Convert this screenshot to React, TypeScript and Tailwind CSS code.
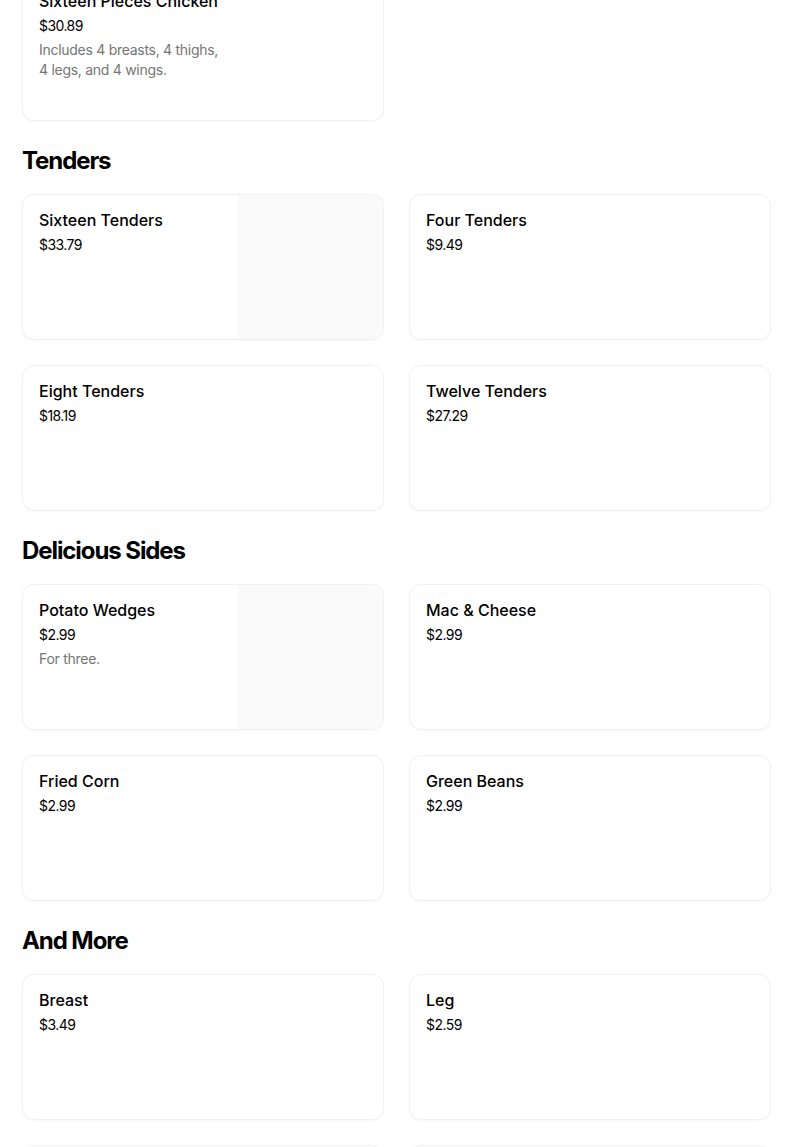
import React from 'react';

interface Item {
  name: string;
  price: string;
  desc?: string;
  image?: boolean;
}

interface Section {
  title?: string;
  items: Item[];
}

const sections: Section[] = [
  {
    items: [
      {
        name: 'Sixteen Pieces Chicken',
        price: '$30.89',
        desc: 'Includes 4 breasts, 4 thighs, 4 legs, and 4 wings.',
      },
    ],
  },
  {
    title: 'Tenders',
    items: [
      { name: 'Sixteen Tenders', price: '$33.79', image: true },
      { name: 'Four Tenders', price: '$9.49' },
      { name: 'Eight Tenders', price: '$18.19' },
      { name: 'Twelve Tenders', price: '$27.29' },
    ],
  },
  {
    title: 'Delicious Sides',
    items: [
      { name: 'Potato Wedges', price: '$2.99', desc: 'For three.', image: true },
      { name: 'Mac & Cheese', price: '$2.99' },
      { name: 'Fried Corn', price: '$2.99' },
      { name: 'Green Beans', price: '$2.99' },
    ],
  },
  {
    title: 'And More',
    items: [
      { name: 'Breast', price: '$3.49' },
      { name: 'Leg', price: '$2.59' },
      { name: 'Thigh', price: '$2.59' },
      { name: 'Wing', price: '$1.99' },
    ],
  },
];

const MenuCard: React.FC<{ item: Item }> = ({ item }) => (
  <div className="flex h-[146px] overflow-hidden rounded-[12px] border border-[#f1f1f1] bg-white shadow-[0_1px_3px_rgba(0,0,0,0.03)]">
    <div className="flex-1 pl-[16px] pr-[8px] pt-[13px]">
      <div className="text-[16px] font-medium leading-[24px] text-[#000]">{item.name}</div>
      <div className="mt-[3px] text-[14px] leading-[20px] tracking-[-0.04em] text-[#000]">{item.price}</div>
      {item.desc && (
        <div className="mt-[4px] w-[190px] text-[14px] leading-[20px] tracking-[-0.02em] text-[#757575]">
          {item.desc}
        </div>
      )}
    </div>
    {item.image && <div className="w-[145px] shrink-0 bg-[#fafafa]" />}
  </div>
);

export default function App() {
  return (
    <div className="h-[1147px] overflow-hidden bg-white" style={{ fontFamily: 'Inter, "Noto Sans", sans-serif' }}>
      <div className="-mt-[25px] ml-[22px] w-[749px]">
        {sections.map((section, i) => (
          <div key={i}>
            {section.title && (
              <h2 className="mb-[17px] mt-[24px] text-[24px] font-bold leading-[32px] tracking-[-0.045em] text-black">
                {section.title}
              </h2>
            )}
            <div className="grid grid-cols-2 gap-[25px]">
              {section.items.map((item) => (
                <MenuCard key={item.name} item={item} />
              ))}
            </div>
          </div>
        ))}
      </div>
    </div>
  );
}
